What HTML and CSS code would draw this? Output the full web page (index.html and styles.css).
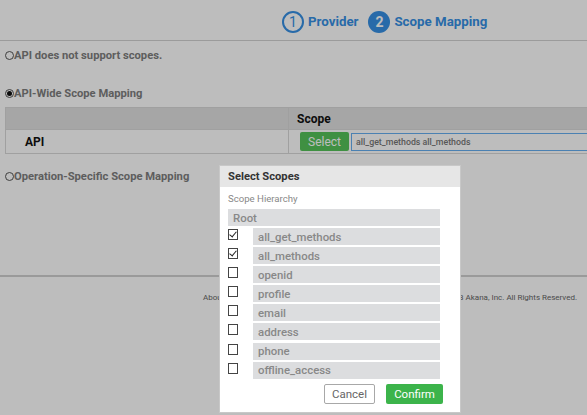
FILE: index.html
```html
<!DOCTYPE html>
<html>
<head>
<meta charset="utf-8">
<link rel="stylesheet" href="styles.css">
</head>
<body>
<div class="page">
  <header class="topbar">
    <div class="steps">
      <div class="step"><span class="num outline">1</span><span class="label">Provider</span></div>
      <div class="step"><span class="num filled">2</span><span class="label">Scope Mapping</span></div>
    </div>
  </header>
  <main class="content">
    <div class="option first"><span class="radio"></span>API does not support scopes.</div>
    <div class="option second"><span class="radio on"></span>API-Wide Scope Mapping</div>
    <div class="table">
      <div class="trow thead">
        <div class="cell c1"></div>
        <div class="cell c2">Scope</div>
      </div>
      <div class="trow tbody">
        <div class="cell c1 name">API</div>
        <div class="cell c2 scopecell">
          <button class="btn-select">Select</button>
          <div class="scope-input">all_get_methods all_methods</div>
        </div>
      </div>
    </div>
    <div class="option third"><span class="radio"></span>Operation-Specific Scope Mapping</div>
  </main>
  <footer class="footer">
    <span>About</span>
    <span>Copyright © 2008-2023 Akana, Inc. All Rights Reserved.</span>
  </footer>
</div>
<div class="overlay"></div>
<div class="modal">
  <div class="modal-head">Select Scopes</div>
  <div class="modal-body">
    <div class="hier">Scope Hierarchy</div>
    <div class="bar root">Root</div>
    <div class="item"><span class="cb checked"></span><div class="bar">all_get_methods</div></div>
    <div class="item"><span class="cb checked"></span><div class="bar">all_methods</div></div>
    <div class="item"><span class="cb"></span><div class="bar">openid</div></div>
    <div class="item"><span class="cb"></span><div class="bar">profile</div></div>
    <div class="item"><span class="cb"></span><div class="bar">email</div></div>
    <div class="item"><span class="cb"></span><div class="bar">address</div></div>
    <div class="item"><span class="cb"></span><div class="bar">phone</div></div>
    <div class="item"><span class="cb"></span><div class="bar">offline_access</div></div>
    <div class="actions">
      <button class="btn-cancel">Cancel</button>
      <button class="btn-confirm">Confirm</button>
    </div>
  </div>
</div>
</body>
</html>
```
FILE: styles.css
```css
* { box-sizing: border-box; }
html, body { margin: 0; padding: 0; }
body {
  font-family: Roboto, "Liberation Sans", sans-serif;
  background: #fff;
  width: 587px;
  height: 415px;
  overflow: hidden;
}
.page { width: 587px; }
.topbar {
  height: 41px;
  border-bottom: 1px solid #d2d2d2;
  display: flex;
  align-items: center;
  padding-left: 282px;
  padding-top: 3px;
}
.steps { display: flex; gap: 10px; }
.step { display: flex; align-items: center; gap: 4px; }
.num {
  width: 22px; height: 22px;
  border-radius: 50%;
  display: flex; align-items: center; justify-content: center;
  font-size: 14px; font-weight: 700;
}
.num.outline { border: 2px solid #3690e4; color: #3690e4; font-weight: 400; }
.num.filled { background: #3690e4; color: #fff; }
.label { font-size: 13.3px; font-weight: 700; color: #3690e4; }

.content { padding: 0 0 0 5px; }
.option {
  display: flex; align-items: center;
  font-size: 11.2px; font-weight: 700; color: #7e7e7e;
  height: 14px;
}
.option.first { margin-top: 7px; }
.option.second { margin-top: 24px; }
.option.third { margin-top: 15px; }
.radio {
  width: 9px; height: 9px;
  border: 1px solid #555;
  border-radius: 50%;
  margin-right: 0;
  position: relative;
  flex: none;
}
.radio.on::after {
  content: ""; position: absolute; left: 1px; top: 1px;
  width: 5px; height: 5px; border-radius: 50%; background: #111;
}
.table {
  margin-top: 7px;
  width: 640px;
  border: 1px solid #d8d8d8;
}
.trow { display: flex; }
.cell { border-right: 1px solid #d8d8d8; }
.c1 { width: 283px; flex: none; }
.c2 { flex: 1; border-right: none; }
.thead { background: #e0e0e0; height: 22px; border-bottom: 1px solid #d8d8d8; }
.thead .c2 { font-size: 12px; font-weight: 700; color: #111; display: flex; align-items: center; padding-left: 8px; }
.tbody { height: 23px; }
.name { font-size: 12px; font-weight: 700; color: #111; display: flex; align-items: center; padding-left: 19px; }
.scopecell { display: flex; align-items: center; padding-left: 11px; gap: 2px; }
.btn-select {
  font-family: inherit;
  background: #55c35a; color: #fff; border: none; border-radius: 2px;
  height: 19px; width: 49px; font-size: 12px; padding: 0;
}
.scope-input {
  flex: 1; height: 18px; border: 1px solid #66aef0;
  font-size: 8.8px; color: #777; font-weight: 500;
  display: flex; align-items: center; padding-left: 4px;
}
.footer {
  margin-top: 92px;
  border-top: 2px solid #d0d0d0;
  height: 43px;
  display: flex; justify-content: space-between; align-items: center;
  padding: 0 10px 0 203px;
  font-size: 8px; color: #666;
}
.overlay {
  position: fixed; inset: 0;
  background: rgba(0, 0, 0, 0.26);
}
.modal {
  position: absolute; left: 219px; top: 165px;
  width: 242px; height: 248px;
  background: #fff;
  border: 1px solid #c8c8c8;
}
.modal-head {
  height: 21px; background: #e6e6e6;
  font-size: 11.2px; font-weight: 700; color: #333;
  display: flex; align-items: center; padding-left: 8px;
}
.modal-body { padding: 5px 20px 0 8px; }
.hier { font-size: 9.6px; color: #888; height: 13px; line-height: 13px; margin-bottom: 4px; }
.bar {
  height: 17px; background: #dcdddf;
  font-size: 11.4px; font-weight: 500; color: #888;
  display: flex; align-items: center; padding-left: 5px;
}
.root { margin-bottom: 2px; }
.item { display: flex; align-items: flex-start; height: 19.1px; }
.item .bar { flex: 1; margin-left: 15px; }
.cb {
  width: 10px; height: 11px; margin-top: 1px;
  border: 1px solid #444; background: #fff;
  flex: none; position: relative;
}
.cb.checked::after {
  content: ""; position: absolute; left: 2px; top: 0px;
  width: 3px; height: 6px;
  border-right: 1px solid #222; border-bottom: 1px solid #222;
  transform: rotate(40deg);
}
.actions { display: flex; justify-content: flex-end; gap: 11px; margin-top: 3px; margin-right: -3px; }
.actions button { font-family: inherit; font-size: 11.5px; height: 20px; padding: 0; border-radius: 2px; }
.btn-cancel { width: 51px; background: #fff; border: 1px solid #a8a8a8; color: #666; }
.btn-confirm { width: 57px; background: #3cb44b; border: none; color: #fff; }
```
